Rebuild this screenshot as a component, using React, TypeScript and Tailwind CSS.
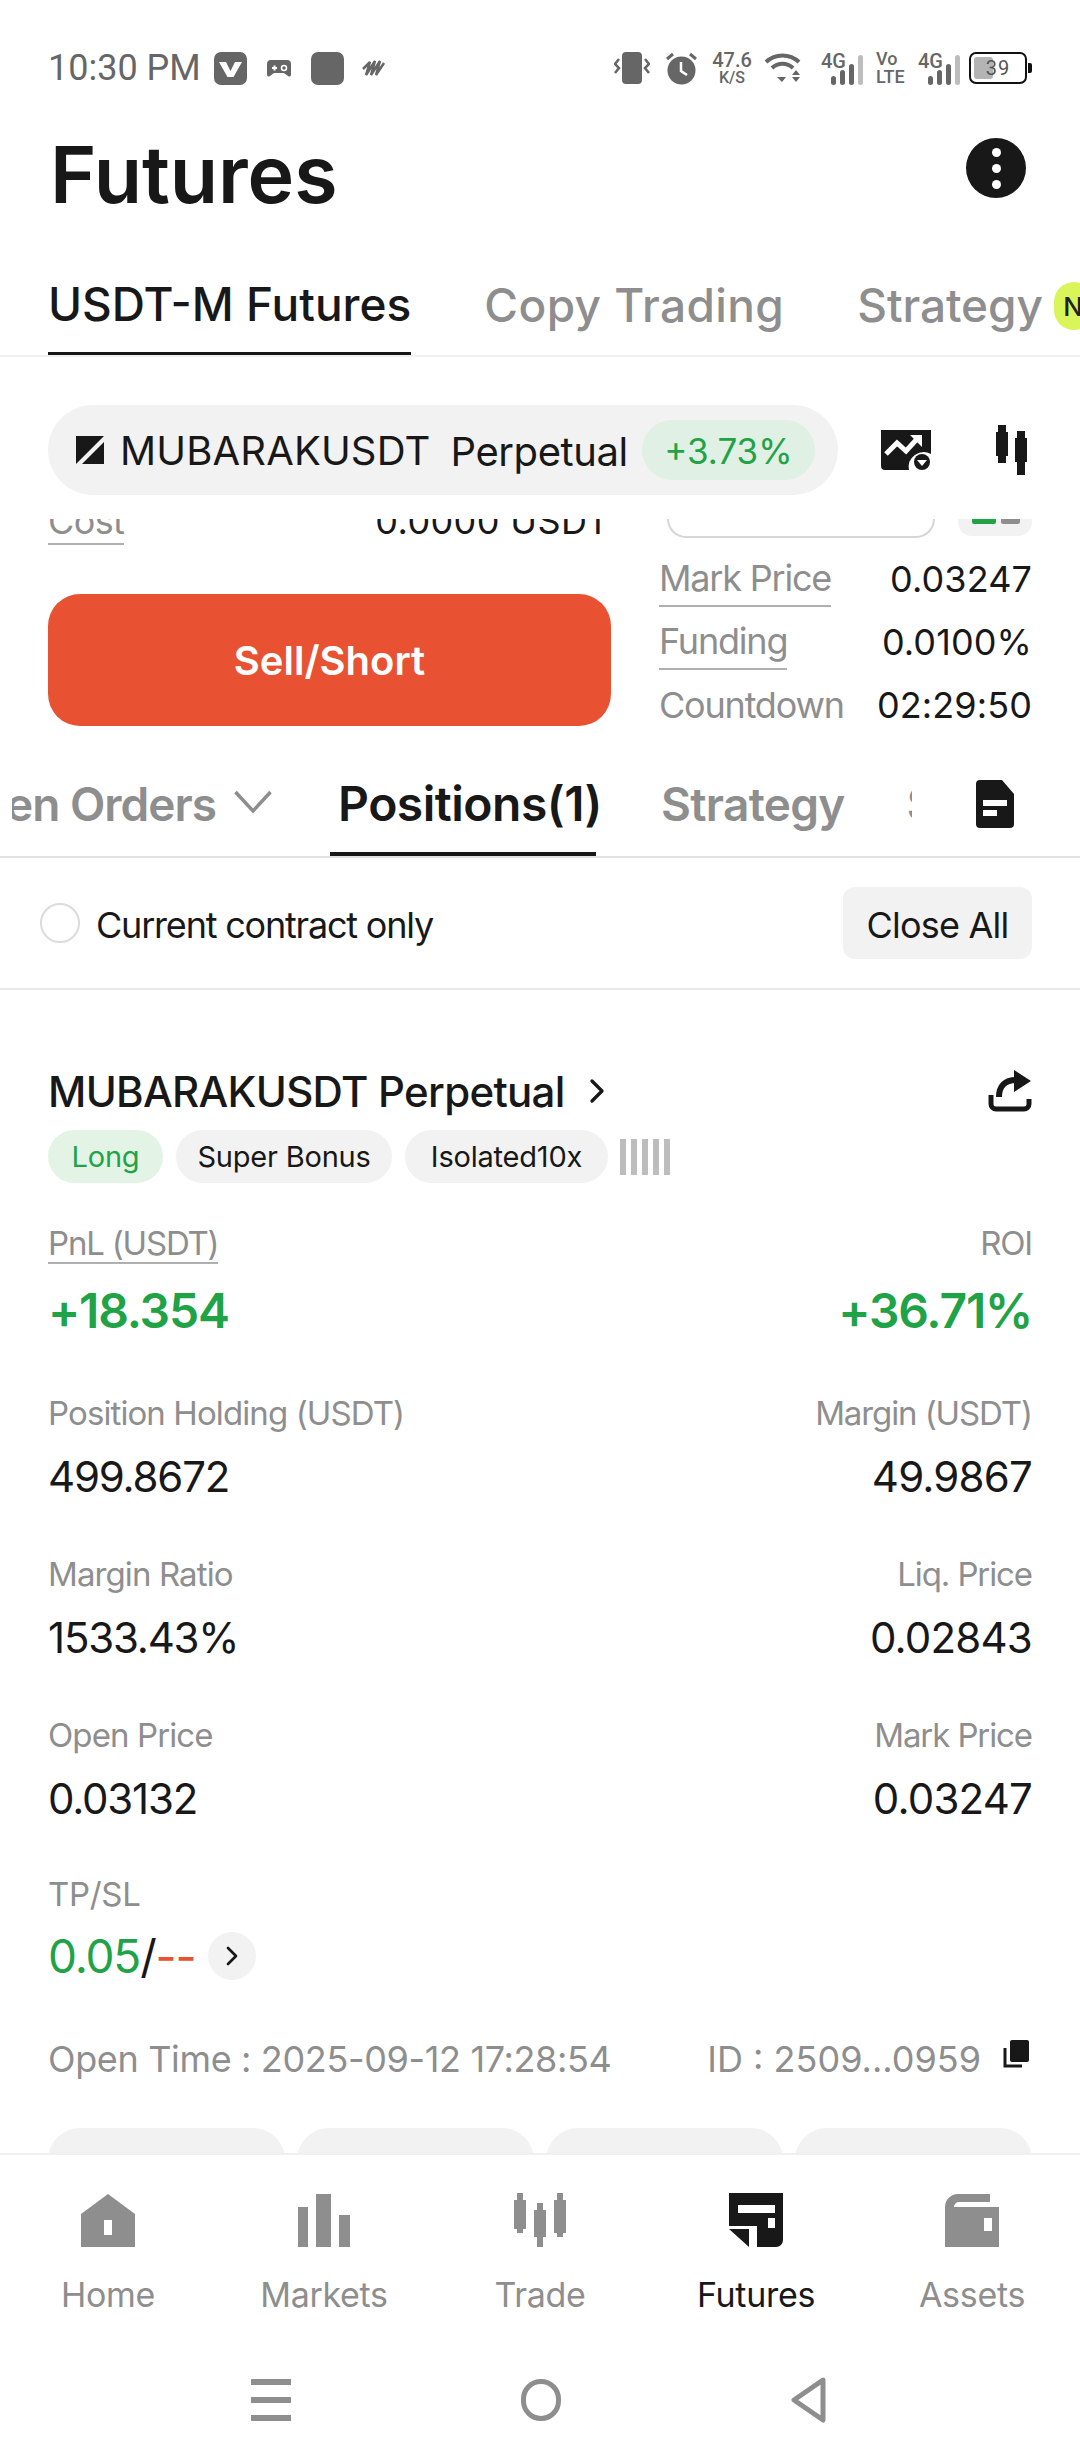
import { ChevronRight } from "lucide-react";

const STATS = [
  { label: "Position Holding (USDT)", value: "499.8672", rightLabel: "Margin (USDT)", rightValue: "49.9867" },
  { label: "Margin Ratio", value: "1533.43%", rightLabel: "Liq. Price", rightValue: "0.02843" },
  { label: "Open Price", value: "0.03132", rightLabel: "Mark Price", rightValue: "0.03247" },
];

function Signal() {
  return (
    <div className="flex flex-col items-start w-[42px] h-[33px] relative">
      <span className="absolute left-0 top-[-3px] text-[20px] leading-[24px] font-medium text-[#666] [font-family:Roboto,sans-serif]">4G</span>
      <svg width="42" height="33" viewBox="0 0 42 33" className="absolute left-0 top-0">
        <rect x="10" y="24" width="5" height="9" rx="2.5" fill="#666" />
        <rect x="19" y="18" width="5" height="15" rx="2.5" fill="#666" />
        <rect x="28" y="12" width="5" height="21" rx="2.5" fill="#666" />
        <rect x="37" y="3" width="5" height="30" rx="2.5" fill="#bdbdbd" />
      </svg>
    </div>
  );
}

function StatusBar() {
  return (
    <div className="h-[136px] flex items-center justify-between pl-[48px] pr-[48px] text-[#666] [font-family:Roboto,sans-serif]">
      <div className="flex items-center">
        <span className="text-[36px] leading-none w-[166px] whitespace-nowrap">10:30 PM</span>
        <svg width="33" height="33" viewBox="0 0 33 33">
          <rect width="33" height="33" rx="7" fill="#666" />
          <path d="M5 10h7l4.500 9 4.500-9h7l-8.500 15h-6z" fill="#fff" />
        </svg>
        <svg width="24" height="17" viewBox="0 0 24 17" className="ml-[20px]">
          <path d="M4 0h16a4 4 0 0 1 4 4v11a2 2 0 0 1-3 1l-4-3H7l-4 3a2 2 0 0 1-3-1V4a4 4 0 0 1 4-4z" fill="#666" />
          <path d="M5 7h5v2H5zM6.500 5.500h2v5h-2z" fill="#fff" />
          <circle cx="17" cy="8" r="2.500" fill="none" stroke="#fff" strokeWidth="1.500" />
        </svg>
        <div className="w-[33px] h-[33px] rounded-[7px] bg-[#666] ml-[20px]" />
        <svg width="27" height="18" viewBox="0 0 27 18" className="ml-[18px]">
          <path d="M1 10l7-7-4 13 9-14-4 14 9-14-4 14 8-12" fill="none" stroke="#666" strokeWidth="2.500" />
        </svg>
      </div>
      <div className="flex items-center">
        <svg width="36" height="32" viewBox="0 0 36 32">
          <rect x="8" y="0" width="20" height="32" rx="4" fill="#666" />
          <path d="M5 7L1 12l4 4-4 5M31 7l4 5-4 4 4 5" fill="none" stroke="#666" strokeWidth="2.500" />
        </svg>
        <svg width="33" height="33" viewBox="0 0 33 33" className="ml-[15px]">
          <circle cx="16.500" cy="18.500" r="14" fill="#666" />
          <path d="M16 10v9l6 4" fill="none" stroke="#fff" strokeWidth="2.500" />
          <path d="M2 7l6-5M31 7l-6-5" stroke="#666" strokeWidth="3" />
        </svg>
        <div className="ml-[14px] w-[40px] flex flex-col items-center font-medium">
          <span className="text-[20px] leading-[19px]">47.6</span>
          <span className="text-[16px] leading-[15px]">K/S</span>
        </div>
        <svg width="37" height="30" viewBox="0 0 37 30" className="ml-[12px]">
          <path d="M2 9a24 24 0 0 1 33 0" fill="none" stroke="#666" strokeWidth="4" />
          <path d="M8 15a15 15 0 0 1 21 0" fill="none" stroke="#666" strokeWidth="4" />
          <path d="M13 24h9l-4 5zM28 22l4-5 4 5zM28 24h8l-4 5z" fill="#666" />
        </svg>
        <div className="ml-[20px]"><Signal /></div>
        <div className="ml-[13px] w-[29px] flex flex-col items-start font-medium text-[18px] leading-[18px]">
          <span>Vo</span>
          <span>LTE</span>
        </div>
        <div className="ml-[13px]"><Signal /></div>
        <div className="ml-[9px] relative w-[63px] h-[32px] flex">
          <div className="w-[58px] h-[32px] rounded-[7px] border-2 border-[#111] relative flex items-center justify-center">
            <div className="absolute left-[3px] top-[3px] bottom-[3px] w-[19px] rounded-[3px] bg-[#b4b4b4]" />
            <span className="relative text-[20px] leading-none text-[#555] tracking-[1px]">39</span>
          </div>
          <div className="w-[4px] h-[10px] bg-[#111] rounded-r-[2px] self-center ml-[1px]" />
        </div>
      </div>
    </div>
  );
}

function TitleRow() {
  return (
    <div className="h-[74px] flex items-center justify-between pl-[50px] pr-[54px]">
      <h1 className="pt-[2px] text-[79px] leading-none font-semibold text-[#181818] tracking-[-0.1px]">Futures</h1>
      <div className="w-[60px] h-[60px] -mt-[10px] rounded-full bg-[#181818] flex flex-col items-center justify-center gap-[7px]">
        <span className="w-[9px] h-[9px] rounded-full bg-white" />
        <span className="w-[9px] h-[9px] rounded-full bg-white" />
        <span className="w-[9px] h-[9px] rounded-full bg-white" />
      </div>
    </div>
  );
}

function TopTabs() {
  return (
    <div className="mt-[46px] h-[101px] border-b-2 border-[#f0f0f0] pl-[48px] flex gap-[73px] overflow-hidden text-[46px] font-medium whitespace-nowrap">
      <div className="h-[100px] border-b-[4px] border-[#181818] flex items-center text-[#181818] tracking-[0px]">USDT-M Futures</div>
      <div className="flex items-center text-[#8e8e8e] tracking-[0.4px]">Copy Trading</div>
      <div className="flex items-center text-[#8e8e8e] relative tracking-[-0.1px]">
        Strategy
        <div className="absolute left-[197px] top-[26px] w-[40px] h-[48px] rounded-full bg-[#d9f55a] text-[26px] text-[#222] flex items-center pl-[9px]">N</div>
      </div>
    </div>
  );
}

function SymbolBar() {
  return (
    <div className="pt-[48px] pb-[24px] pl-[48px] flex items-center">
      <div className="w-[790px] h-[90px] rounded-full bg-[#f2f2f2] flex items-center pl-[28px]">
        <svg width="28" height="28" viewBox="0 0 28 28">
          <path d="M0 0h28L0 28z" fill="#181818" />
          <path d="M28 6v22H6z" fill="#181818" />
        </svg>
        <span className="ml-[16px] pt-[2px] text-[40px] text-[#181818] tracking-[0.15px]">MUBARAKUSDT</span>
        <span className="ml-[20px] pt-[3px] text-[40px] text-[#181818] tracking-[-0.4px]">Perpetual</span>
        <div className="ml-[14px] w-[173px] h-[60px] rounded-full bg-[#e1f0e4] flex items-center justify-center pt-[2px] text-[35px] text-[#1fa346]">+3.73%</div>
      </div>
      <svg width="50" height="40" viewBox="0 0 50 40" className="ml-[43px]">
        <path d="M0 0h50v24a15 15 0 0 0-22 16H4a4 4 0 0 1-4-4z" fill="#181818" />
        <path d="M5 24l11-11 9 8 11-12" fill="none" stroke="#fff" strokeWidth="5" />
        <path d="M29 5h12v12z" fill="#fff" />
        <circle cx="41" cy="32" r="8" fill="#181818" />
        <path d="M36 30h10l-5 6z" fill="#fff" />
      </svg>
      <svg width="32" height="50" viewBox="0 0 32 50" className="ml-[64px]">
        <path d="M3 0h8v7h2v24h-2v7H3v-7H1V7h2z" fill="#181818" />
        <path d="M22 6h8v7h2v24h-2v13h-8V37h-2V13h2z" fill="#181818" />
      </svg>
    </div>
  );
}

function OrderBlock() {
  const rows = [
    { label: "Mark Price", value: "0.03247", underline: true },
    { label: "Funding", value: "0.0100%", underline: true },
    { label: "Countdown", value: "02:29:50", underline: false },
  ];
  return (
    <div className="flex pl-[48px] pr-[48px]">
      <div className="w-[563px] shrink-0">
        <div className="-mt-[20px] h-[46px] flex justify-between text-[36px] leading-[44px]">
          <span className="text-[#8e8e8e] border-b-2 border-[#b0b0b0] h-[46px] tracking-[-0.6px]">Cost</span>
          <span className="text-[#181818] pr-[1px] tracking-[0.4px]">0.0000 USDT</span>
        </div>
        <div className="mt-[49px] h-[132px] rounded-[32px] bg-[#e85232] flex items-center justify-center pt-[2px] text-[40px] font-semibold text-white">Sell/Short</div>
      </div>
      <div className="ml-[48px] flex-1">
        <div className="h-[28px] flex items-start pl-[8px]">
          <div className="w-[268px] h-[19px] border-2 border-t-0 border-[#d6d6d6] rounded-b-[24px]" />
          <div className="ml-[23px] w-[74px] h-[17px] rounded-b-[14px] bg-[#f2f2f2] flex pl-[14px] gap-[5px]">
            <span className="w-[24px] h-[5px] rounded-b-[2px] bg-[#1fa346]" />
            <span className="w-[19px] h-[5px] rounded-b-[2px] bg-[#8e8e8e]" />
          </div>
        </div>
        {rows.map((r) => (
          <div key={r.label} className="h-[63px] flex items-center justify-between text-[36px] whitespace-nowrap">
            <span className={r.underline ? "text-[#8e8e8e] tracking-[-1.2px] border-b-2 border-[#b0b0b0]" : "text-[#8e8e8e] tracking-[-1.2px]"}>{r.label}</span>
            <span className="text-[#181818] tracking-[0.1px]">{r.value}</span>
          </div>
        ))}
      </div>
    </div>
  );
}

function PositionTabs() {
  return (
    <div className="mt-[14px] h-[108px] border-b-2 border-[#e2e2e2] flex text-[46px] font-semibold whitespace-nowrap">
      <div className="ml-[12px] w-[900px] h-full overflow-hidden relative">
        <div className="-ml-[68px] w-max h-full flex items-center pt-[2px] text-[#8e8e8e] tracking-[-1px]">
          <span className="shrink-0">Open Orders</span>
          <svg width="38" height="24" viewBox="0 0 38 24" className="ml-[18px] -mt-[4px] shrink-0">
            <path d="M1.500 2L19 21 36.500 2" fill="none" stroke="#8e8e8e" strokeWidth="3.500" />
          </svg>
          <div className="ml-[58px] shrink-0 w-[266px] h-[108px] -mt-[2px] border-b-[5px] border-[#181818] flex items-center pl-[8px] pt-[7px] text-[48px] tracking-[-0.5px] text-[#181818]">Positions(1)</div>
          <span className="ml-[65px] shrink-0 tracking-[-0.7px]">Strategy</span>
          <span className="ml-[62px] shrink-0 tracking-[-0.7px]">Strategy</span>
        </div>
      </div>
      <svg width="38" height="48" viewBox="0 0 38 48" className="ml-[64px] mt-[30px]">
        <path d="M4 0h22l12 14v30a4 4 0 0 1-4 4H4a4 4 0 0 1-4-4V4a4 4 0 0 1 4-4z" fill="#181818" />
        <rect x="7" y="20" width="24" height="6" fill="#fff" />
        <rect x="7" y="30" width="14" height="6" fill="#fff" />
      </svg>
    </div>
  );
}

function FilterRow() {
  return (
    <div className="h-[132px] border-b-2 border-[#e8e8e8] flex items-center pl-[40px] pr-[48px]">
      <div className="w-[40px] h-[40px] rounded-full border-2 border-[#dcdcdc]" />
      <span className="ml-[16px] pt-[3px] text-[36px] text-[#181818] tracking-[-1.2px]">Current contract only</span>
      <div className="ml-auto w-[189px] h-[72px] rounded-[12px] bg-[#f2f2f2] flex items-center justify-center pt-[3px] text-[36px] text-[#181818] tracking-[-0.8px]">Close All</div>
    </div>
  );
}

function PositionCard() {
  return (
    <div className="px-[48px]">
      <div className="mt-[80px] h-[42px] flex items-center">
        <span className="text-[42px] font-medium text-[#181818] tracking-[-0.7px]">MUBARAKUSDT Perpetual</span>
        <ChevronRight className="ml-[12px] w-[40px] h-[40px] text-[#181818]" strokeWidth={2} />
        <svg width="44" height="42" viewBox="0 0 44 42" className="ml-auto">
          <path d="M11 27c0-11 6-17 17-17" fill="none" stroke="#181818" strokeWidth="6" />
          <path d="M26 0l17 11-17 11z" fill="#181818" />
          <path d="M3 25v9a5 5 0 0 0 5 5h28a5 5 0 0 0 5-5v-5" fill="none" stroke="#181818" strokeWidth="5" />
        </svg>
      </div>
      <div className="mt-[18px] flex items-center gap-[13px] text-[29px] tracking-[-0.2px]">
        <div className="w-[115px] h-[53px] rounded-full bg-[#e3f4e7] flex items-center justify-center text-[#1fa346]">Long</div>
        <div className="w-[216px] h-[53px] rounded-full bg-[#f2f2f2] flex items-center justify-center text-[#181818]">Super Bonus</div>
        <div className="w-[203px] h-[53px] rounded-full bg-[#f2f2f2] flex items-center justify-center text-[#181818]">Isolated10x</div>
        <div className="flex gap-[5px] -ml-[1px]">
          {[0, 1, 2, 3, 4].map((i) => (
            <span key={i} className="w-[6px] h-[36px] bg-[#bdbdbd]" />
          ))}
        </div>
      </div>
      <div className="mt-[37px] flex justify-between h-[44px] text-[33px] leading-[46px] text-[#8e8e8e] tracking-[-1.2px]">
        <span className="border-b-2 border-[#b0b0b0] h-[44px]">PnL (USDT)</span>
        <span>ROI</span>
      </div>
      <div className="mt-[19px] h-[56px] flex items-center justify-between text-[48px] font-semibold text-[#1fa346] tracking-[-1.2px]">
        <span>+18.354</span>
        <span>+36.71%</span>
      </div>
      <div className="mt-[52px] grid grid-cols-2 gap-y-[49px]">
        {STATS.map((s) => (
          <div key={s.label} className="col-span-2 flex justify-between">
            <div className="flex flex-col">
              <span className="h-[44px] text-[33px] leading-[44px] text-[#8e8e8e] tracking-[-0.9px]">{s.label}</span>
              <span className="mt-[12px] h-[56px] text-[42px] leading-[60px] text-[#181818] tracking-[-1.2px]">{s.value}</span>
            </div>
            <div className="flex flex-col items-end">
              <span className="h-[44px] text-[33px] leading-[44px] text-[#8e8e8e] tracking-[-1.1px]">{s.rightLabel}</span>
              <span className="mt-[12px] h-[56px] text-[42px] leading-[60px] text-[#181818] tracking-[-0.8px]">{s.rightValue}</span>
            </div>
          </div>
        ))}
      </div>
      <div className="mt-[47px] h-[44px] text-[33px] leading-[44px] text-[#8e8e8e] tracking-[-0.3px]">TP/SL</div>
      <div className="mt-[12px] h-[56px] flex items-center text-[46px] tracking-[-1.2px]">
        <span className="text-[#1fa346]">0.05</span>
        <span className="text-[#181818]">/</span>
        <span className="text-[#e85232]">--</span>
        <div className="ml-[13px] w-[48px] h-[48px] rounded-full bg-[#f2f2f2] flex items-center justify-center">
          <ChevronRight className="w-[32px] h-[32px] text-[#181818]" strokeWidth={2} />
        </div>
      </div>
      <div className="mt-[53px] h-[44px] flex items-center text-[36px] text-[#8e8e8e] tracking-[-0.35px]">
        <span>Open Time : 2025-09-12 17:28:54</span>
        <span className="ml-auto tracking-[0px]">ID : 2509...0959</span>
        <svg width="26" height="30" viewBox="0 0 26 30" className="ml-[22px] mr-[3px] -mt-[8px]">
          <rect x="7" y="0" width="19" height="22" rx="2" fill="#181818" />
          <path d="M2 8v18h17" fill="none" stroke="#181818" strokeWidth="3" />
        </svg>
      </div>
      <div className="mt-[47px] grid grid-cols-4 gap-[12px]">
        {[0, 1, 2, 3].map((i) => (
          <div key={i} className="h-[60px] rounded-t-[32px] bg-[#f2f2f2]" />
        ))}
      </div>
    </div>
  );
}

function NavIcon({ name }: { name: string }) {
  if (name === "Home")
    return (
      <svg width="54" height="54" viewBox="0 0 54 54">
        <path d="M27 1l27 20v33H0V21z" fill="#8e8e8e" />
        <rect x="23" y="27" width="8" height="15" fill="#fff" />
      </svg>
    );
  if (name === "Markets")
    return (
      <svg width="54" height="54" viewBox="0 0 54 54">
        <rect x="1" y="14" width="10" height="40" fill="#8e8e8e" />
        <rect x="19" y="1" width="15" height="53" fill="#8e8e8e" />
        <rect x="42" y="22" width="11" height="32" fill="#8e8e8e" />
      </svg>
    );
  if (name === "Trade")
    return (
      <svg width="54" height="54" viewBox="0 0 54 54">
        <path d="M4 0h6v7h3v29h-3v4H4v-4H1V7h3z" fill="#8e8e8e" />
        <path d="M24 10h6v7h3v27h-3v10h-6V44h-3V17h3z" fill="#8e8e8e" />
        <path d="M44 0h6v7h3v33h-3v4h-6v-4h-3V7h3z" fill="#8e8e8e" />
      </svg>
    );
  if (name === "Futures")
    return (
      <svg width="54" height="54" viewBox="0 0 54 54">
        <path d="M0 0h54v47a7 7 0 0 1-7 7H28V33H0z" fill="#181818" />
        <path d="M0 36h20v18z" fill="#181818" />
        <rect x="9" y="12" width="37" height="8" fill="#fff" />
        <rect x="39" y="25" width="7" height="10" fill="#fff" />
      </svg>
    );
  return (
    <svg width="54" height="54" viewBox="0 0 54 54">
      <path d="M0 54V14a13 13 0 0 1 13-13h32v8H14a5 5 0 0 0-5 5h45v40z" fill="#8e8e8e" />
      <rect x="39" y="25" width="8" height="13" fill="#fff" />
    </svg>
  );
}

function BottomNav() {
  const items = ["Home", "Markets", "Trade", "Futures", "Assets"];
  return (
    <div className="h-[167px] border-t-2 border-[#f0f0f0] flex bg-white">
      {items.map((name) => (
        <div key={name} className="w-[216px] flex flex-col items-center pt-[38px]">
          <NavIcon name={name} />
          <span className={"mt-[26px] text-[34px] leading-[44px] tracking-[-0.3px] " + (name === "Futures" ? "text-[#181818]" : "text-[#8e8e8e]")}>{name}</span>
        </div>
      ))}
    </div>
  );
}

function SystemNav() {
  return (
    <div className="h-[140px] pt-[20px] flex items-center justify-center gap-[230px] bg-white -ml-[2px]">
      <div className="w-[40px] flex flex-col gap-[12px]">
        <span className="h-[6px] bg-[#8e8e8e]" />
        <span className="h-[6px] bg-[#8e8e8e]" />
        <span className="h-[6px] bg-[#8e8e8e]" />
      </div>
      <div className="w-[40px] h-[42px] rounded-full border-[5px] border-[#8e8e8e]" />
      <svg width="36" height="46" viewBox="0 0 36 46">
        <path d="M32 3L3 23l29 20z" fill="none" stroke="#8e8e8e" strokeWidth="5" strokeLinejoin="round" />
      </svg>
    </div>
  );
}

export default function App() {
  return (
    <div className="w-[1080px] h-[2460px] bg-white flex flex-col overflow-hidden [font-family:Inter,sans-serif]">
      <StatusBar />
      <TitleRow />
      <TopTabs />
      <SymbolBar />
      <div className="flex-1 min-h-0 overflow-hidden">
        <OrderBlock />
        <PositionTabs />
        <FilterRow />
        <PositionCard />
      </div>
      <BottomNav />
      <SystemNav />
    </div>
  );
}
